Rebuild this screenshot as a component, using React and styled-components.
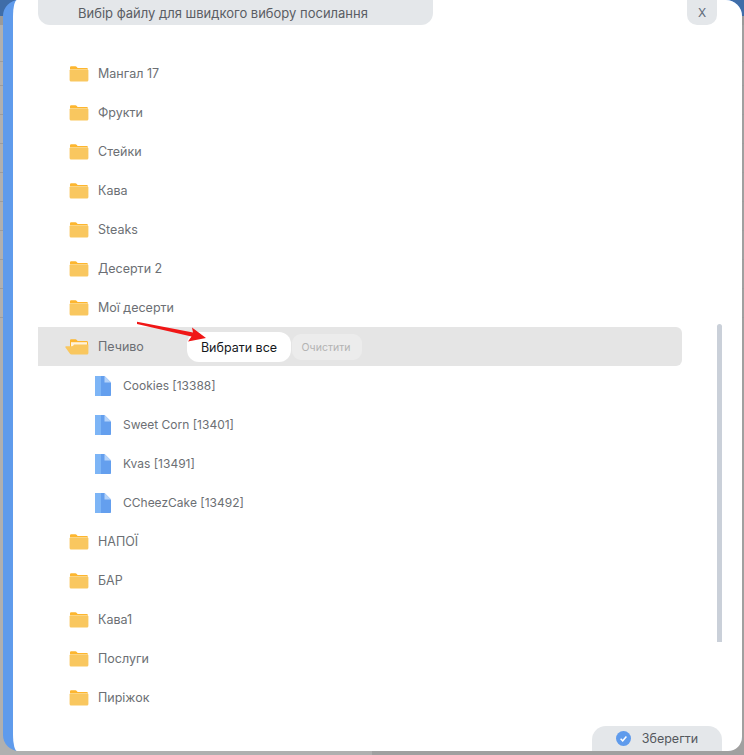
import React from "react";
import styled, { createGlobalStyle } from "styled-components";

const GlobalStyle = createGlobalStyle`
  html, body {
    margin: 0;
    padding: 0;
    height: 100%;
    overflow: hidden;
  }
  body {
    font-family: "Inter", "Noto Sans", sans-serif;
  }
`;

// the page behind the dialog: dark top bar, table rows, dimmed by the backdrop
const Overlay = styled.div`
  width: 744px;
  height: 755px;
  overflow: hidden;
  padding-left: 3px;
  box-sizing: border-box;
  background:
    linear-gradient(#3f6da8, #3f6da8) 0 0 / 100% 16px no-repeat,
    linear-gradient(#9a9a9a, #9a9a9a) 0 16px / 100% 9px no-repeat,
    linear-gradient(#9c9c9c, #9c9c9c) 0 61px / 100% 1px no-repeat,
    repeating-linear-gradient(180deg, #9c9c9c 0 1px, transparent 1px 29px) 0 85px / 100% 233px no-repeat,
    linear-gradient(90deg, #b0b0b0 0 50%, #a0a0a0 50%);
`;

const Modal = styled.div`
  width: 739px;
  height: 751px;
  padding-left: 10px;
  box-sizing: border-box;
  background: #5f9bec;
  border-radius: 16px;
`;

const Panel = styled.div`
  position: relative;
  height: 100%;
  box-sizing: border-box;
  background: #fff;
  border-radius: 4px 16px 14px 4px / 16px 16px 14px 16px;
  display: flex;
  flex-direction: column;
`;

const Header = styled.div`
  display: flex;
  justify-content: space-between;
  padding: 0 25px;
`;

const Title = styled.div`
  width: 395px;
  height: 25px;
  padding: 5px 0 0 40px;
  box-sizing: border-box;
  background: #e4e7ea;
  border-radius: 0 0 12px 12px;
  color: #5a5d64;
  font-size: 13px;
  line-height: 16px;
`;

const Close = styled.button`
  width: 30px;
  height: 25px;
  padding: 0;
  border: 0;
  background: #e4e7ea;
  border-radius: 0 0 10px 10px;
  color: #5f6b7a;
  font-family: "Inter", sans-serif;
  font-size: 12px;
`;

const Tree = styled.div`
  margin-top: 29px;
  padding-left: 25px;
  width: 644px;
`;

const Row = styled.div`
  position: relative;
  height: 39px;
  display: flex;
  align-items: center;
  padding-left: ${(p) => (p.$file ? "57px" : p.$open ? "27px" : "31px")};
  border-radius: ${(p) => (p.$open ? "0 6px 6px 0" : "0")};
  background: ${(p) => (p.$open ? "#e5e5e5" : "transparent")};
`;

const Label = styled.span`
  margin-left: ${(p) => (p.$file ? "12px" : "9px")};
  color: #6c6f74;
  font-size: ${(p) => (p.$file ? "12px" : "12.5px")};
  white-space: nowrap;
`;

const RowActions = styled.div`
  position: absolute;
  left: 149px;
  top: 5px;
  display: flex;
  align-items: center;
  gap: 1px;
`;

const SelectAll = styled.button`
  width: 104px;
  height: 30px;
  padding: 0;
  border: 0;
  border-radius: 12px;
  background: #fff;
  color: #15171c;
  font-family: "Inter", sans-serif;
  font-size: 12.5px;
`;

const Clear = styled.button`
  width: 70px;
  height: 26px;
  padding: 0 2px 0 0;
  border: 0;
  border-radius: 9px;
  background: #ececec;
  color: #b3b3b3;
  font-family: "Inter", sans-serif;
  font-size: 10.5px;
`;

const Arrow = styled.svg`
  position: absolute;
  left: 124px;
  top: 321px;
  width: 72px;
  height: 24px;
`;

const Scrollbar = styled.div`
  position: absolute;
  left: 704px;
  top: 324px;
  width: 5px;
  height: 318px;
  border-radius: 3px 3px 0 0;
  background: #cad0d9;
`;

const SaveButton = styled.button`
  position: absolute;
  left: 579px;
  bottom: 0;
  width: 130px;
  height: 25px;
  padding: 0;
  border: 0;
  border-radius: 14px 14px 0 0;
  background: #e4e7ea;
  display: flex;
  align-items: center;
  justify-content: center;
  gap: 11px;
  color: #55585e;
  font-family: "Inter", sans-serif;
  font-size: 12.5px;
`;

const FolderIcon = () => (
  <svg width="20" height="16" viewBox="0 0 20 16">
    <path d="M1 3 V1.6 C1 .8 1.6 .3 2.4 .3 H6.4 C7 .3 7.4 .6 7.8 1 L8.6 2 H17.6 C18.4 2 19 2.6 19 3.4 V4 H1 Z" fill="#fdb62f" />
    <path d="M1 3 H18 C18.6 3 19 3.4 19 4 V5 H1 Z" fill="#ffe3a8" />
    <path d="M.6 4.4 C.6 3.8 1 3.5 1.6 3.5 H18.4 C19 3.5 19.4 3.8 19.4 4.4 V14 C19.4 14.9 18.8 15.5 17.9 15.5 H2.1 C1.2 15.5 .6 14.9 .6 14 Z" fill="#f9c75f" />
  </svg>
);

const OpenFolderIcon = () => (
  <svg width="24" height="16" viewBox="0 0 24 16">
    <path d="M5 3 V1.6 C5 .8 5.6 .3 6.4 .3 H10.4 C11 .3 11.4 .6 11.8 1 L12.6 2 H21.6 C22.4 2 23 2.6 23 3.4 V8 H5 Z" fill="#fdb62f" />
    <path d="M6 3.2 H22 V9 H6 Z" fill="#fff3dc" />
    <path d="M.3 8.3 C.2 7.6 .6 7.2 1.3 7.2 H7 C7.6 7.2 8 6.9 8.4 6.4 L9 5.6 H23.4 V14 C23.4 14.9 22.8 15.5 21.9 15.5 H6.6 C5.8 15.5 5.2 15.1 4.8 14.4 Z" fill="#f9c75f" />
  </svg>
);

const FileIcon = () => (
  <svg width="16" height="20" viewBox="0 0 16 20">
    <path d="M0 1 C0 .4 .4 0 1 0 H9.5 L16 6.5 V19 C16 19.6 15.6 20 15 20 H1 C.4 20 0 19.6 0 19 Z" fill="#649fee" />
    <path d="M0 1 C0 .4 .4 0 1 0 H6 V20 H1 C.4 20 0 19.6 0 19 Z" fill="#7db5f6" />
    <path d="M9.5 0 L16 6.5 H9.5 Z" fill="#b4d3fa" />
  </svg>
);

const CheckIcon = () => (
  <svg width="15" height="15" viewBox="0 0 15 15">
    <circle cx="7.5" cy="7.5" r="7.5" fill="#5f9bec" />
    <path d="M4.6 7.8 L6.7 9.8 L10.4 5.6" fill="none" stroke="#fff" strokeWidth="1.5" />
  </svg>
);

const before = ["Мангал 17", "Фрукти", "Стейки", "Кава", "Steaks", "Десерти 2", "Мої десерти"];
const files = ["Cookies [13388]", "Sweet Corn [13401]", "Kvas [13491]", "CCheezCake [13492]"];
const after = ["НАПОЇ", "БАР", "Кава1", "Послуги", "Пиріжок"];

const App = () => (
  <>
    <GlobalStyle />
    <Overlay>
      <Modal>
        <Panel>
          <Header>
            <Title>Вибір файлу для швидкого вибору посилання</Title>
            <Close>X</Close>
          </Header>
          <Tree>
            {before.map((name) => (
              <Row key={name}>
                <FolderIcon />
                <Label>{name}</Label>
              </Row>
            ))}
            <Row $open>
              <OpenFolderIcon />
              <Label>Печиво</Label>
              <RowActions>
                <SelectAll>Вибрати все</SelectAll>
                <Clear>Очистити</Clear>
              </RowActions>
            </Row>
            {files.map((name) => (
              <Row key={name} $file>
                <FileIcon />
                <Label $file>{name}</Label>
              </Row>
            ))}
            {after.map((name) => (
              <Row key={name}>
                <FolderIcon />
                <Label>{name}</Label>
              </Row>
            ))}
          </Tree>
          <Arrow viewBox="0 0 72 24">
            <path d="M0 .8 L56 11.5 L55 6.5 L69 17 L51 20.5 L54.5 15.5 L0 3 Z" fill="#f01616" />
          </Arrow>
          <Scrollbar />
          <SaveButton>
            <CheckIcon />
            Зберегти
          </SaveButton>
        </Panel>
      </Modal>
    </Overlay>
  </>
);

export default App;
